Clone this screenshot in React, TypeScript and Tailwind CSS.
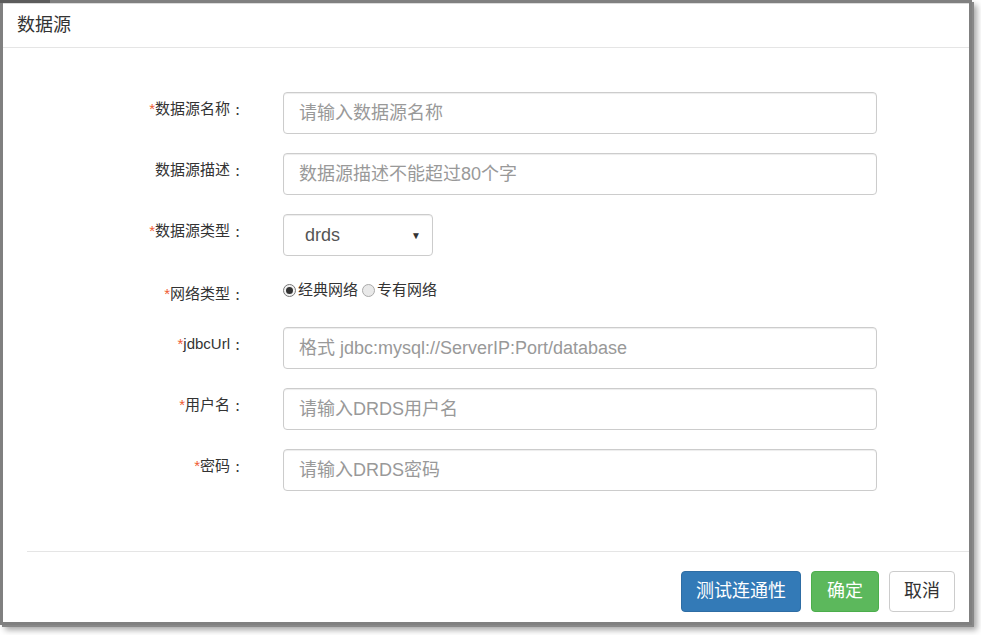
import React from "react";

const font = "font-['Liberation_Sans','Noto_Sans_CJK_SC',sans-serif]";

const Label = ({ text, required, pad = "pt-[7px]" }: { text: string; required?: boolean; pad?: string }) => (
  <div className={`w-[242px] shrink-0 flex justify-end text-[15px] leading-[20px] text-[#333] ${pad}`}>
    <span>
      {required && <span className="text-[#ef5a32]">*</span>}
      {text}
    </span>
    <span className="w-[15px] text-center font-['Noto_Sans_CJK_SC',sans-serif]">:</span>
  </div>
);

const TextInput = ({ placeholder }: { placeholder: string }) => (
  <input
    placeholder={placeholder}
    className={`w-[594px] h-[42px] rounded-[4px] border border-[#ccc] px-[15px] text-[18px] text-[#555] outline-none placeholder:text-[#999] shadow-[inset_0_1px_1px_rgba(0,0,0,0.075)] ${font}`}
  />
);

const Radio = ({ checked, label }: { checked?: boolean; label: string }) => (
  <label className="flex items-center">
    <span
      className={`w-[13px] h-[13px] rounded-full border flex items-center justify-center ${
        checked ? "border-[#777] bg-[#f2f2f2]" : "border-[#aaa] bg-[#e9e9e9]"
      }`}
    >
      {checked && <span className="w-[7px] h-[7px] rounded-full bg-[#333]" />}
    </span>
    <span className="ml-[2px] text-[15px] text-[#333]">{label}</span>
  </label>
);

export default function App() {
  return (
    <div className={`w-[981px] h-[635px] bg-white ${font}`}>
      <div className="w-[972px] h-[625px] flex flex-col bg-[#808080] shadow-[2px_2px_0_#888,5px_5px_6px_rgba(0,0,0,0.35)]">
        <div className="h-[3px] flex shrink-0">
          <div className="w-[50px] bg-[#5c5c5c]" />
        </div>
        <div className="flex-1 mx-[3px] mb-[3px] flex flex-col bg-white border-t border-[#dcdcdc]">
          <div className="h-[44px] shrink-0 border-b border-[#e5e5e5] pl-[14px] flex items-center">
            <span className="text-[18px] text-[#333]">数据源</span>
          </div>

          <div className="flex-1 pt-[44px] flex flex-col gap-[19px]">
            <div className="flex items-start gap-[38px]">
              <Label text="数据源名称" required />
              <TextInput placeholder="请输入数据源名称" />
            </div>
            <div className="flex items-start gap-[38px]">
              <Label text="数据源描述" />
              <TextInput placeholder="数据源描述不能超过80个字" />
            </div>
            <div className="flex items-start gap-[38px]">
              <Label text="数据源类型" required />
              <div className="w-[150px] h-[42px] rounded-[4px] border border-[#ccc] pl-[21px] pr-[11px] flex items-center justify-between shadow-[inset_0_1px_1px_rgba(0,0,0,0.075)]">
                <span className="text-[18px] text-[#555]">drds</span>
                <span className="text-[10px] text-[#333]">▼</span>
              </div>
            </div>
            <div className="flex items-start gap-[38px] h-[33px]">
              <Label text="网络类型" required pad="pt-[9px]" />
              <div className="mt-[5px] h-[20px] flex items-center gap-[4px] leading-[20px]">
                <Radio checked label="经典网络" />
                <Radio label="专有网络" />
              </div>
            </div>
            <div className="flex items-start gap-[38px]">
              <Label text="jdbcUrl" required />
              <TextInput placeholder="格式 jdbc:mysql://ServerIP:Port/database" />
            </div>
            <div className="flex items-start gap-[38px]">
              <Label text="用户名" required />
              <TextInput placeholder="请输入DRDS用户名" />
            </div>
            <div className="flex items-start gap-[38px]">
              <Label text="密码" required />
              <TextInput placeholder="请输入DRDS密码" />
            </div>
          </div>

          <div className="ml-[24px] border-t border-[#e5e5e5] pt-[19px] pb-[10px] pr-[14px] flex justify-end gap-[10px]">
            <button className="w-[120px] h-[41px] rounded-[4px] border border-[#2e6da4] bg-[#337ab7] text-white text-[18px]">
              测试连通性
            </button>
            <button className="w-[68px] h-[41px] rounded-[4px] border border-[#4cae4c] bg-[#5cb85c] text-white text-[18px]">
              确定
            </button>
            <button className="w-[66px] h-[41px] rounded-[4px] border border-[#ccc] bg-white text-[#333] text-[18px]">
              取消
            </button>
          </div>
        </div>
      </div>
    </div>
  );
}
